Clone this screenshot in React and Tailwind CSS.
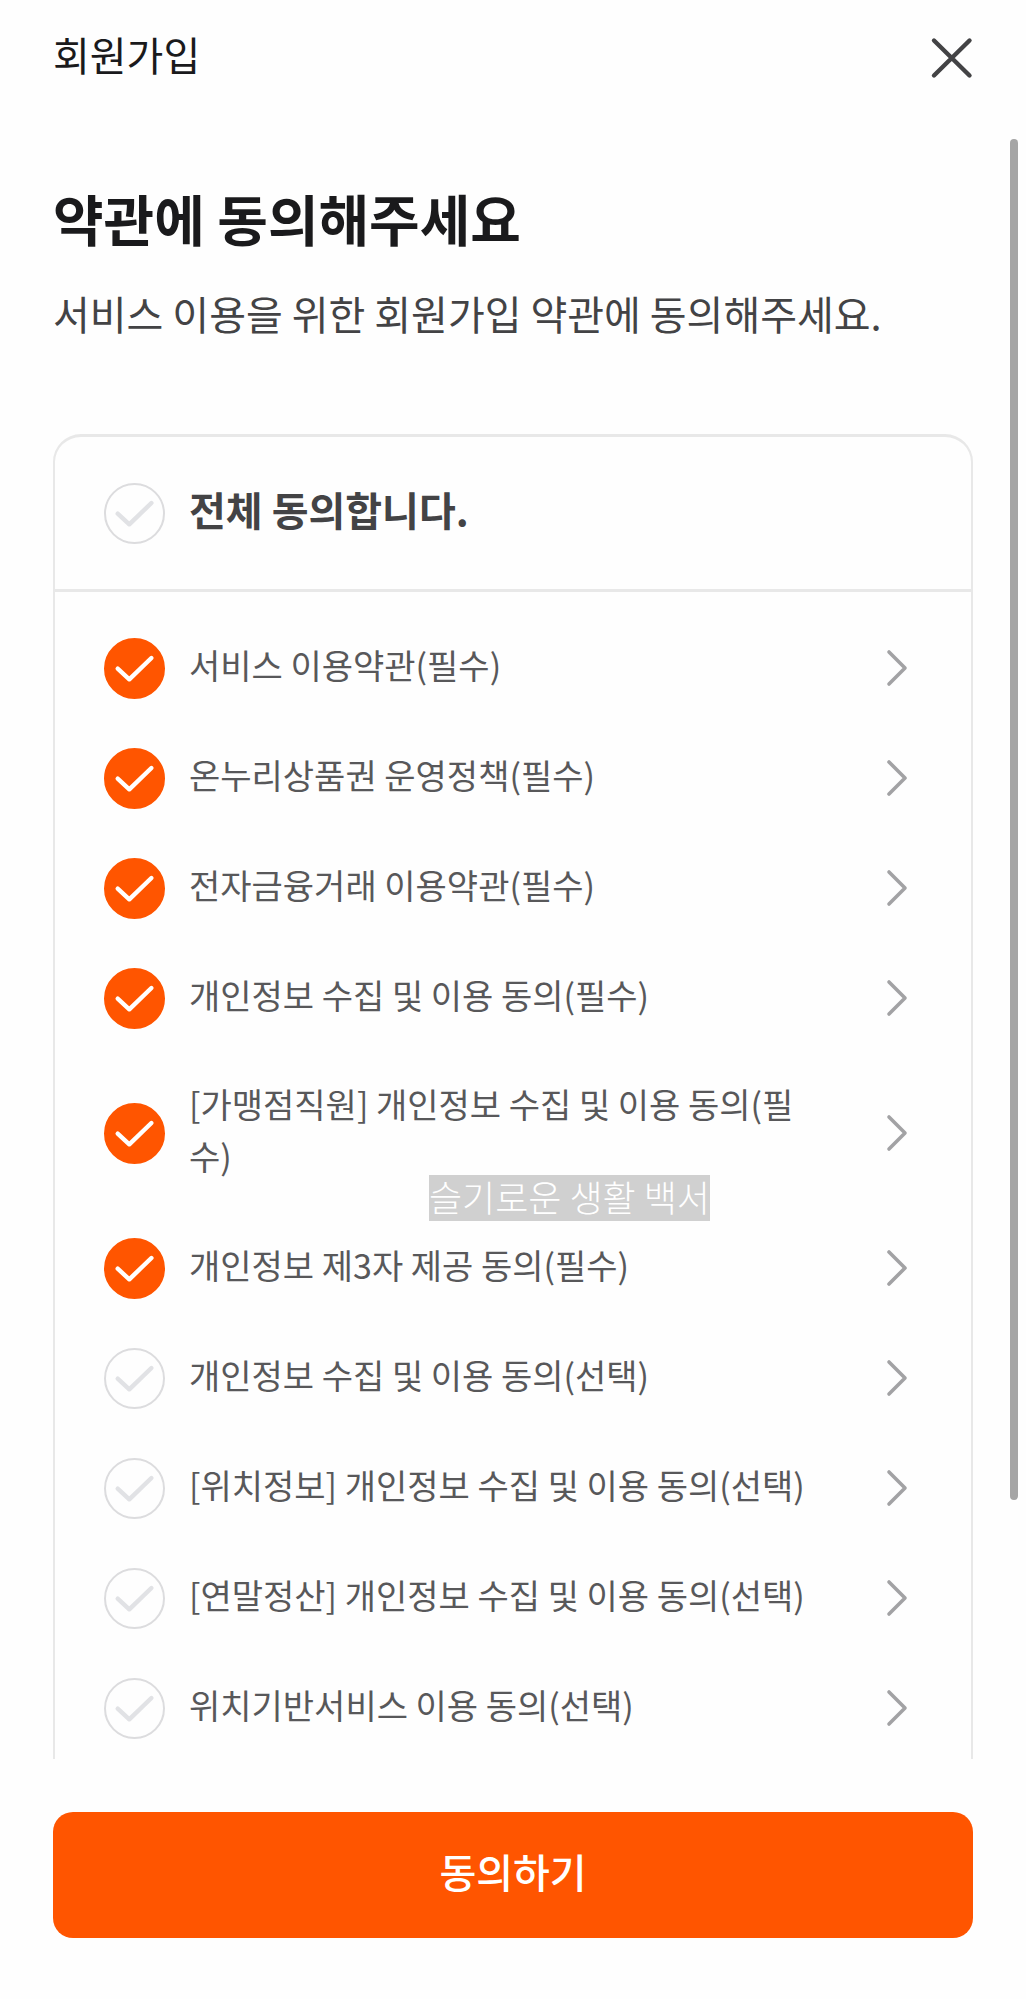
import { useState } from "react";

const TERMS = [
  { label: "서비스 이용약관(필수)", checked: true },
  { label: "온누리상품권 운영정책(필수)", checked: true },
  { label: "전자금융거래 이용약관(필수)", checked: true },
  { label: "개인정보 수집 및 이용 동의(필수)", checked: true },
  { label: "[가맹점직원] 개인정보 수집 및 이용 동의(필수)", checked: true, note: "슬기로운 생활 백서" },
  { label: "개인정보 제3자 제공 동의(필수)", checked: true },
  { label: "개인정보 수집 및 이용 동의(선택)", checked: false },
  { label: "[위치정보] 개인정보 수집 및 이용 동의(선택)", checked: false },
  { label: "[연말정산] 개인정보 수집 및 이용 동의(선택)", checked: false },
  { label: "위치기반서비스 이용 동의(선택)", checked: false },
];

function RoundCheck({ id, checked, onChange }) {
  return (
    <span className="grid size-[61px] shrink-0 place-items-center">
      <input
        id={id}
        type="checkbox"
        checked={checked}
        onChange={onChange}
        className="col-start-1 row-start-1 size-[61px] cursor-pointer appearance-none rounded-full border-2 border-[#dcdcde] checked:border-[#ff5500] checked:bg-[#ff5500]"
      />
      <svg
        viewBox="0 0 61 61"
        fill="none"
        strokeWidth="4.4"
        strokeLinecap="round"
        strokeLinejoin="round"
        aria-hidden="true"
        className={
          checked
            ? "pointer-events-none col-start-1 row-start-1 size-[61px] stroke-white"
            : "pointer-events-none col-start-1 row-start-1 size-[61px] stroke-[#e1e2e5]"
        }
      >
        <path d="M13.7 30.7 25.3 41.3 47.4 20" />
      </svg>
    </span>
  );
}

function TermRow({ id, term, checked, onToggle }) {
  return (
    <li className="relative flex min-h-[110px] items-center pr-[62px]">
      <RoundCheck id={id} checked={checked} onChange={onToggle} />
      <label htmlFor={id} className="ml-6 flex-1 pt-[25px] pb-[31px] text-[34px] leading-[52px] break-all text-[#58585a]">
        {term.label}
      </label>
      <button type="button" aria-label={`${term.label} 보기`} className="ml-20 flex h-[61px] w-6 items-center justify-center">
        <svg width="24" height="40" viewBox="0 0 24 40" fill="none" stroke="#a2a2a4" strokeWidth="3.6" strokeLinecap="round" strokeLinejoin="round" aria-hidden="true">
          <path d="M4 4 20 20 4 36" />
        </svg>
      </button>
      {term.note && (
        <span className="absolute bottom-[-8px] left-[325px] bg-[#d0d0d0] pb-1 text-[36px] leading-[42px] font-light whitespace-nowrap text-white">
          {term.note}
        </span>
      )}
    </li>
  );
}

export default function App() {
  const [checks, setChecks] = useState(TERMS.map((t) => t.checked));
  const all = checks.every(Boolean);

  return (
    <div className="flex h-screen flex-col bg-[#fefefe] font-['Noto_Sans_CJK_KR',sans-serif] text-[#1a1a1c]">
      <header className="flex h-[139px] shrink-0 items-start justify-between px-[53px] pt-6">
        <h1 className="text-[40px] leading-[60px]">회원가입</h1>
        <button type="button" aria-label="닫기" className="mt-3 flex size-11 items-center justify-center">
          <svg width="44" height="44" viewBox="0 0 44 44" fill="none" stroke="#434345" strokeWidth="4.4" strokeLinecap="round" aria-hidden="true">
            <path d="M5 4.500 40.500 39.500M40.500 4.500 5 39.500" />
          </svg>
        </button>
      </header>

      <main className="relative min-h-0 flex-1 overflow-hidden px-[53px] pt-9">
        <h2 className="text-[55px] leading-[84px] font-bold">약관에 동의해주세요</h2>
        <p className="mt-6 text-[40px] leading-[60px] text-[#434345]">서비스 이용을 위한 회원가입 약관에 동의해주세요.</p>

        <section className="mt-[91px] rounded-t-[28px] border-2 border-t-3 border-[#e8e8e8]">
          <div className="flex h-[155px] items-center border-b-3 border-[#e8e8e8] pl-[49px]">
            <RoundCheck id="agree-all" checked={all} onChange={() => setChecks(checks.map(() => !all))} />
            <label htmlFor="agree-all" className="ml-6 pb-2 text-[40px] leading-[60px] font-bold text-[#434345]">
              전체 동의합니다.
            </label>
          </div>
          <ul className="pt-[21px] pb-16 pl-[49px]">
            {TERMS.map((term, i) => (
              <TermRow
                key={term.label}
                id={`term-${i}`}
                term={term}
                checked={checks[i]}
                onToggle={() => setChecks(checks.map((c, j) => (j === i ? !c : c)))}
              />
            ))}
          </ul>
        </section>

        <div className="absolute top-0 right-2 h-[84%] w-2 rounded-full bg-[#a5a5a5]" />
      </main>

      <footer className="shrink-0 px-[53px] pt-[53px] pb-[61px]">
        <button type="button" className="h-[126px] w-full rounded-[20px] bg-[#ff5500] pb-2 text-[40px] leading-[60px] font-medium text-white">
          동의하기
        </button>
      </footer>
    </div>
  );
}
